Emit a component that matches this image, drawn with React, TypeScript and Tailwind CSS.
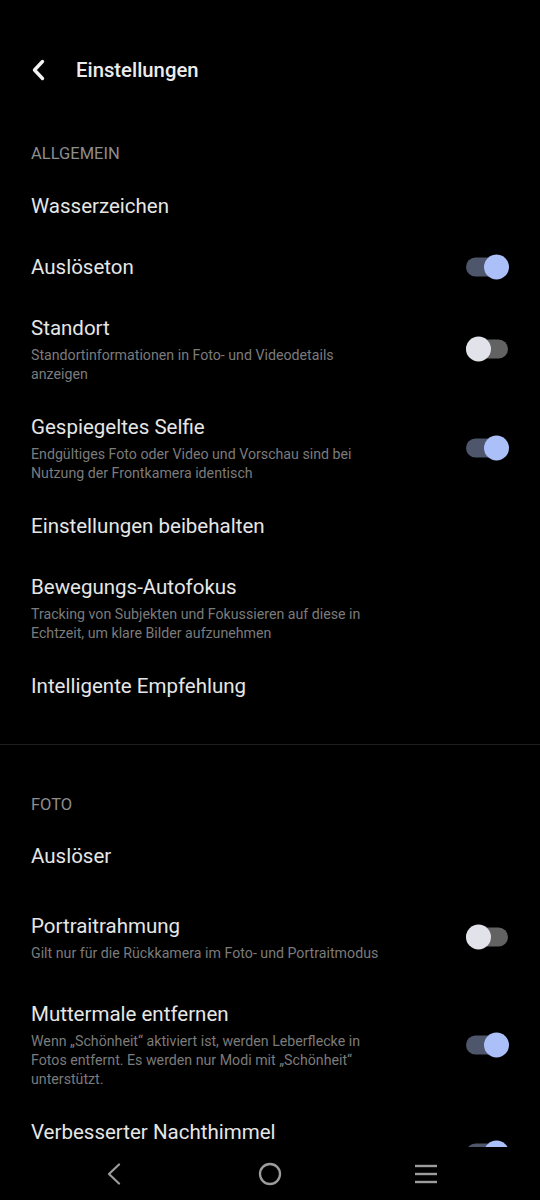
import React from 'react'

type Row = {
  title: string
  sub?: string
  toggle?: 'on' | 'off'
}

const general: Row[] = [
  { title: 'Wasserzeichen' },
  { title: 'Auslöseton', toggle: 'on' },
  { title: 'Standort', sub: 'Standortinformationen in Foto- und Videodetails anzeigen', toggle: 'off' },
  { title: 'Gespiegeltes Selfie', sub: 'Endgültiges Foto oder Video und Vorschau sind bei Nutzung der Frontkamera identisch', toggle: 'on' },
  { title: 'Einstellungen beibehalten' },
  { title: 'Bewegungs-Autofokus', sub: 'Tracking von Subjekten und Fokussieren auf diese in Echtzeit, um klare Bilder aufzunehmen' },
  { title: 'Intelligente Empfehlung' },
]

const photo: Row[] = [
  { title: 'Auslöser' },
  { title: 'Portraitrahmung', sub: 'Gilt nur für die Rückkamera im Foto- und Portraitmodus', toggle: 'off' },
  { title: 'Muttermale entfernen', sub: 'Wenn „Schönheit“ aktiviert ist, werden Leberflecke in Fotos entfernt. Es werden nur Modi mit „Schönheit“ unterstützt.', toggle: 'on' },
  { title: 'Verbesserter Nachthimmel', sub: 'Mehr Details und klarere Sterne bei Aufnahmen des Nachthimmels', toggle: 'on' },
]

function Toggle({ on }: { on: boolean }) {
  return (
    <svg width="44" height="26" viewBox="0 0 44 26" className="shrink-0">
      <rect x="1" y="3.5" width="42" height="19" rx="9.5" fill={on ? '#4e566c' : '#626262'} />
      <circle cx={on ? 31.5 : 13.5} cy="13" r="12.5" fill={on ? '#abc0f9' : '#e2e2ea'} />
    </svg>
  )
}

function SettingRow({ row }: { row: Row }) {
  // rows with a description are a bit tighter at the bottom
  const pad = row.sub ? 'pb-[13px]' : 'pb-[17px]'
  const tall = row.title === 'Portraitrahmung' ? 'min-h-[97px]' : ''
  return (
    <div className={`flex items-center justify-between pl-[31px] pr-[31px] pt-4 ${pad} ${tall}`}>
      <div className="flex-1 max-w-[352px]">
        <div className="text-[20.5px] leading-7 text-[#e6e6e6]">{row.title}</div>
        {row.sub && (
          <div className="mt-[4px] text-[14.2px] leading-[19px] text-[#7b7b7b]">{row.sub}</div>
        )}
      </div>
      {row.toggle && <Toggle on={row.toggle === 'on'} />}
    </div>
  )
}

function SectionLabel({ children, className = '' }: { children: React.ReactNode; className?: string }) {
  return (
    <div className={`pl-[31px] text-[16.5px] leading-5 text-[#8d8d8d] ${className}`}>{children}</div>
  )
}

export default function App() {
  return (
    <div className="w-[540px] h-[1200px] bg-black flex flex-col overflow-hidden font-[family-name:Roboto,sans-serif]">
      <div className="flex-1 overflow-hidden">
        <div className="flex items-center h-7 mt-[56px] pl-[31px]">
          <svg width="14" height="22" viewBox="0 0 14 22" className="shrink-0">
            <polyline points="11.5,2.5 3.5,11 11.5,19.5" fill="none" stroke="#f2f2f2" strokeWidth="3.4" strokeLinecap="round" strokeLinejoin="round" />
          </svg>
          <span className="ml-[31px] text-[20.3px] font-medium text-[#ececec]">Einstellungen</span>
        </div>

        <div className="pt-[60px] pb-[27px]">
          <SectionLabel className="pb-[12px]">ALLGEMEIN</SectionLabel>
          {general.map((r) => (
            <SettingRow key={r.title} row={r} />
          ))}
        </div>

        <div className="h-px bg-[#1f1f1f]" />

        <div className="pt-[50px]">
          <SectionLabel className="pb-[11px]">FOTO</SectionLabel>
          {photo.map((r) => (
            <SettingRow key={r.title} row={r} />
          ))}
        </div>
      </div>

      <nav className="h-[53px] shrink-0 bg-black flex items-center justify-center gap-[116px]">
        <div className="w-10 flex justify-center">
          <svg width="16" height="22" viewBox="0 0 16 22">
            <polyline points="13,1.5 3,11 13,20.5" fill="none" stroke="#9c9c9c" strokeWidth="2.2" strokeLinecap="round" strokeLinejoin="round" />
          </svg>
        </div>
        <div className="w-10 flex justify-center">
          <svg width="24" height="24" viewBox="0 0 24 24">
            <circle cx="12" cy="12" r="10" fill="none" stroke="#9c9c9c" strokeWidth="2.3" />
          </svg>
        </div>
        <div className="w-10 flex justify-center">
          <svg width="24" height="22" viewBox="0 0 24 22">
            <line x1="1" y1="3" x2="23" y2="3" stroke="#9c9c9c" strokeWidth="2.4" />
            <line x1="1" y1="11" x2="23" y2="11" stroke="#9c9c9c" strokeWidth="2.4" />
            <line x1="1" y1="19" x2="23" y2="19" stroke="#9c9c9c" strokeWidth="2.4" />
          </svg>
        </div>
      </nav>
    </div>
  )
}
